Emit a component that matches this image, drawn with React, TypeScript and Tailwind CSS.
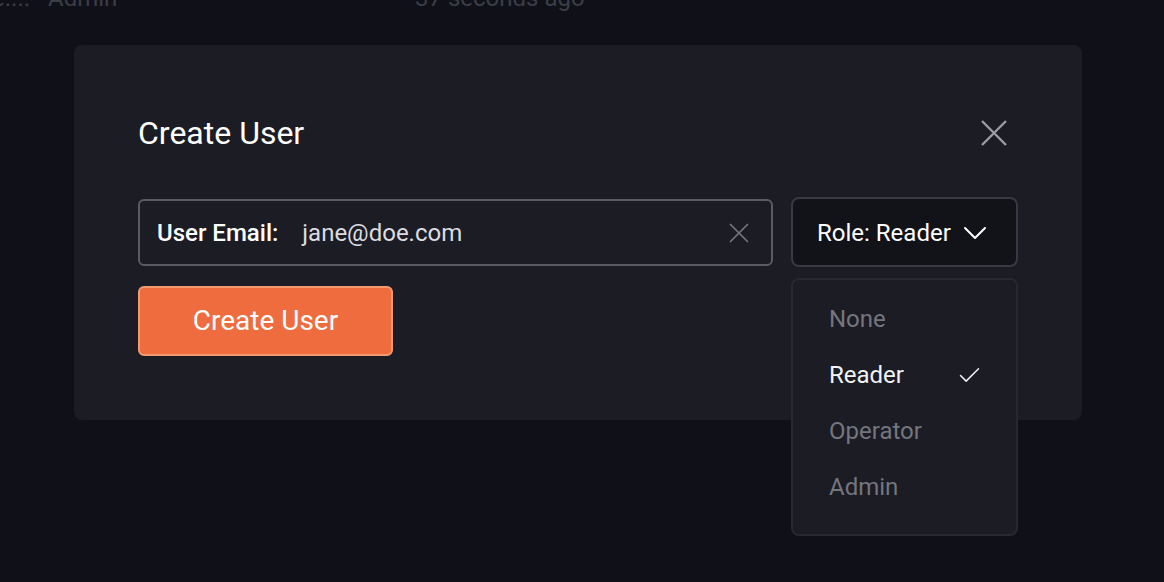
import { Check, ChevronDown, X } from "lucide-react";

const roles = ["None", "Reader", "Operator", "Admin"];

export default function App() {
  const selected = "Reader";

  return (
    <div className="relative h-[582px] w-[1164px] overflow-hidden bg-[#101118] font-['Roboto',sans-serif]">
      {/* table row peeking out above the modal */}
      <div className="-mt-[17px] flex h-[30px] items-center text-[24px] text-[#3b3d47]">
        <span className="-ml-[8px] w-[56px]">e....</span>
        <span className="w-[367px]">Admin</span>
        <span>37 seconds ago</span>
      </div>

      <div className="ml-[74px] mt-[32px] w-[1008px] rounded-lg bg-[#1b1c24] px-[64px] pb-[64px] pt-[68px]">
        <div className="flex h-[40px] items-center justify-between">
          <h2 className="text-[32px] text-white">Create User</h2>
          <button className="mr-[11px] text-[#9b9ca2]">
            <svg width="26" height="26" viewBox="0 0 26 26" fill="none" stroke="currentColor" strokeWidth="2.4">
              <path d="M1 1L25 25M25 1L1 25" />
            </svg>
          </button>
        </div>

        <div className="mt-[44px] flex items-center gap-[18px]">
          <div className="flex h-[67px] w-[635px] items-center rounded-md border-2 border-[#5a5b63] pl-[17px] pr-[15px] pt-[2px]">
            <span className="text-[24px] font-medium text-white">User Email:</span>
            <span className="ml-[24px] flex-1 text-[24px] text-[#dcdce0]">jane@doe.com</span>
            <X size={34} strokeWidth={1.2} className="text-[#76777e]" />
          </div>

          <div className="relative flex-1">
            <button className="flex h-[70px] w-full items-center gap-[4px] rounded-lg border-2 border-[#383942] bg-[#121319] pl-[24px] pt-[2px] text-[24px] text-white">
              Role: {selected}
              <ChevronDown size={40} strokeWidth={1.2} />
            </button>

            <div className="absolute left-0 top-[81px] flex h-[258px] w-full flex-col rounded-lg border-2 border-[#272830] bg-[#1b1c24] pt-[11px]">
              {roles.map((role) => (
                <div
                  key={role}
                  className={
                    role === selected
                      ? "flex h-[56px] items-center justify-between pl-[36px] pr-[33px] text-[24px] text-[#f2f2f4]"
                      : "flex h-[56px] items-center justify-between pl-[36px] pr-[33px] text-[24px] text-[#75767d]"
                  }
                >
                  {role}
                  {role === selected ? <Check size={27} strokeWidth={1.3} /> : null}
                </div>
              ))}
            </div>
          </div>
        </div>

        <button className="mt-[19px] flex h-[70px] w-[255px] items-center justify-center rounded-md border-2 border-[#f59a70] bg-[#ee6c3e] text-[28px] text-white">
          Create User
        </button>
      </div>
    </div>
  );
}
